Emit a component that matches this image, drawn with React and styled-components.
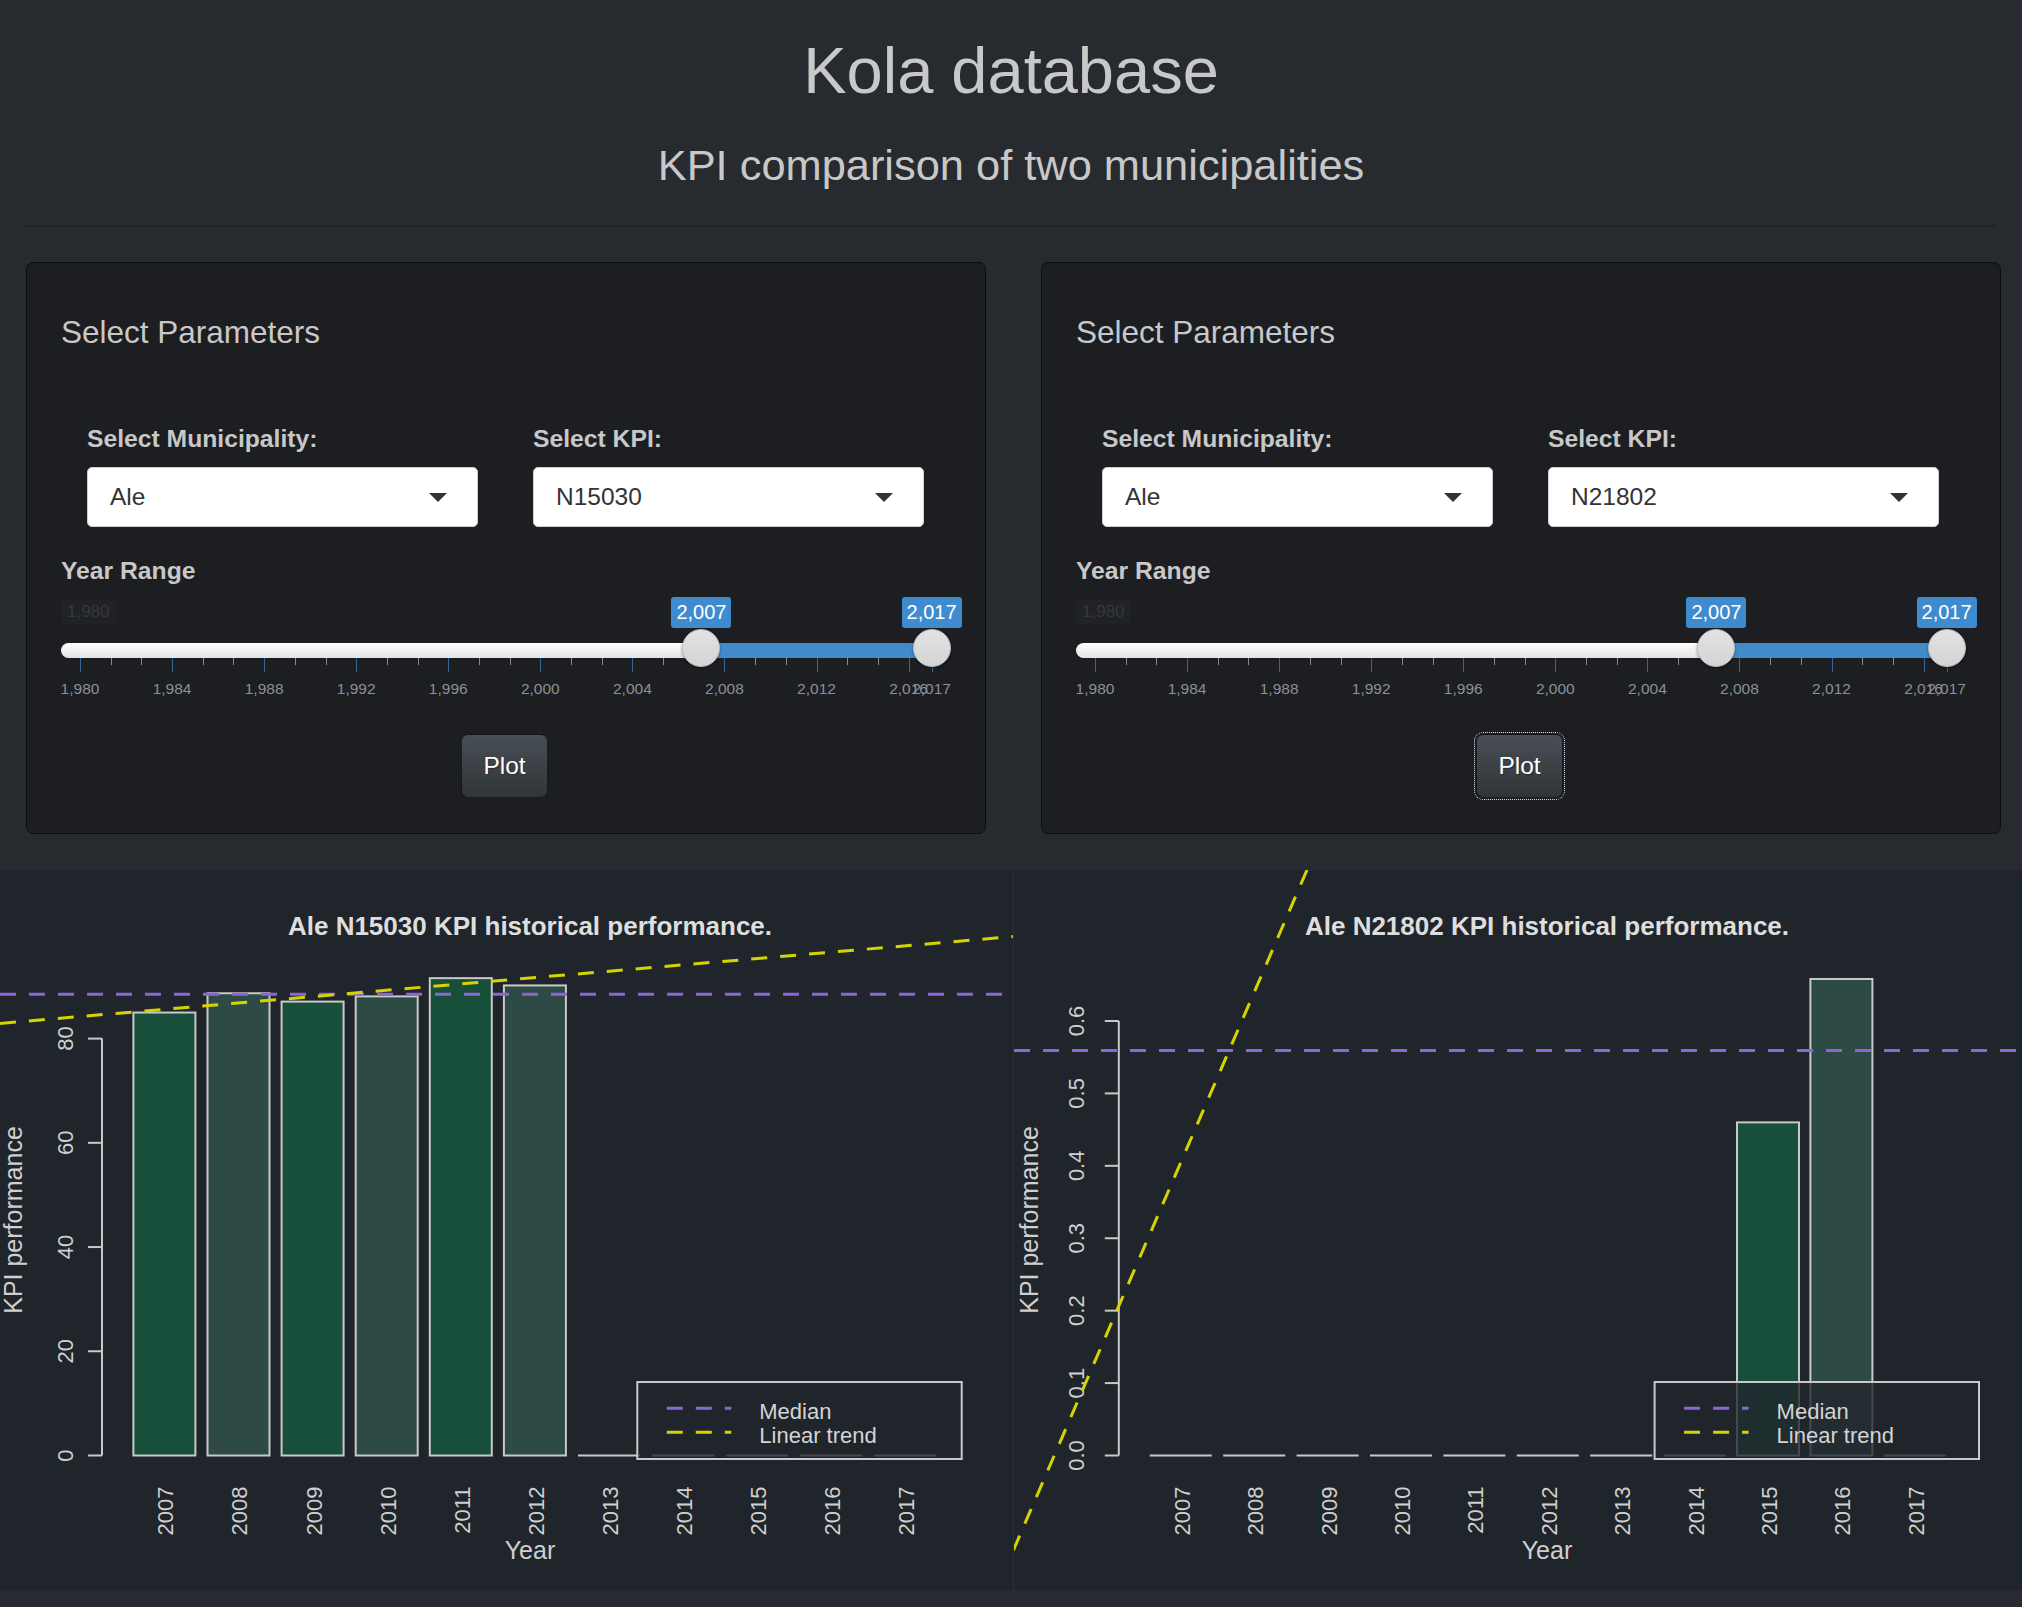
// /////////////// IMPORTS //////////////////////// //

import React from 'react';
import styled, { createGlobalStyle } from 'styled-components';

// /////////////// GLOBAL //////////////////////// //

const GlobalStyle = createGlobalStyle`
  html, body {
    margin: 0;
    padding: 0;
    background: #272b30;
  }
  body {
    font-family: "Liberation Sans", Arial, sans-serif;
    color: #c8c8c8;
  }
  * { box-sizing: border-box; }
`;

// /////////////// HEADER //////////////////////// //

const Header = styled.header`
  text-align: center;
  padding: 0 26px;
`;

const Title = styled.h1`
  margin: 35px 0 0;
  font-size: 65px;
  line-height: 1.1;
  font-weight: 400;
  color: #c8c8c8;
`;

const Subtitle = styled.h3`
  margin: 35px 0 0;
  font-size: 43.4px;
  line-height: 1.1;
  font-weight: 400;
  color: #c8c8c8;
`;

const Rule = styled.hr`
  margin: 35.5px 26px 0;
  border: 0;
  border-top: 2px solid #1f2226;
`;

// /////////////// PANELS //////////////////////// //

const PanelRow = styled.div`
  display: grid;
  grid-template-columns: 960px 960px;
  gap: 55px;
  padding: 0 26px;
  margin-top: 35px;
`;

const Well = styled.section`
  height: 572px;
  background: #1c1e22;
  border: 1px solid #0c0d0e;
  border-radius: 7px;
  box-shadow: inset 0 1px 1px rgba(0, 0, 0, 0.05);
  padding: 0 39px 0 34px;
`;

const WellTitle = styled.h4`
  margin: 52px 0 0;
  font-size: 31.5px;
  line-height: 1.1;
  font-weight: 400;
  color: #c8c8c8;
`;

const InputRow = styled.div`
  display: grid;
  grid-template-columns: 391px 391px;
  gap: 55px;
  padding-left: 26px;
  margin-top: 73px;
`;

const FieldLabel = styled.label`
  display: block;
  font-size: 24.7px;
  line-height: 34.3px;
  font-weight: 700;
  color: #c8c8c8;
  margin-bottom: 10px;
`;

const SelectBox = styled.div`
  height: 60.5px;
  display: flex;
  align-items: center;
  justify-content: space-between;
  background: #fff;
  border: 1px solid #cfcfcf;
  border-radius: 5px;
  padding: 0 30px 0 22px;
  font-size: 24.5px;
  color: #333;
`;

const Caret = styled.span`
  width: 0;
  height: 0;
  border-left: 9px solid transparent;
  border-right: 9px solid transparent;
  border-top: 9px solid #333;
  margin-top: 2px;
`;

const RangeLabel = styled(FieldLabel)`
  margin: 27px 0 0;
`;

// /////////////// SLIDER //////////////////////// //

const MIN_YEAR = 1980;
const MAX_YEAR = 2017;
const STEP = 23.016;
const yearX = (y) => 19 + (y - MIN_YEAR) * STEP;
const fmt = (y) => `${String(y)[0]},${String(y).slice(1)}`;

const SliderBox = styled.div`
  position: relative;
  height: 110px;
  margin-top: 7px;
`;

const Track = styled.div`
  position: absolute;
  left: 0;
  right: 0;
  top: 48px;
  height: 15px;
  border-radius: 8px;
  background: linear-gradient(#ffffff, #e3e3e3);
`;

const TrackFill = styled.div`
  position: absolute;
  top: 48px;
  height: 15px;
  background: #428bca;
`;

const Handle = styled.div`
  position: absolute;
  top: 34px;
  width: 38px;
  height: 38px;
  margin-left: -19px;
  border-radius: 50%;
  background: linear-gradient(#e2e2e2, #d4d4d4);
  border: 1px solid #bdbdbd;
  box-shadow: 0 1px 3px rgba(0, 0, 0, 0.4);
`;

const ValueTag = styled.span`
  position: absolute;
  top: 2px;
  height: 31px;
  line-height: 31px;
  padding: 0 5px;
  transform: translateX(-50%);
  background: #3f8bd0;
  color: #fff;
  font-size: 20px;
  border-radius: 3px;
`;

const MinTag = styled.span`
  position: absolute;
  left: 0;
  top: 4px;
  height: 25px;
  line-height: 25px;
  padding: 0 6px;
  background: #202226;
  color: #35383d;
  font-size: 17px;
  border-radius: 3px;
`;

const Tick = styled.span`
  position: absolute;
  top: 63px;
  width: 1px;
  height: ${(p) => (p.$major ? 14 : 7)}px;
  background: ${(p) => (p.$major ? '#31679b' : '#8a8a8a')};
`;

const TickLabel = styled.span`
  position: absolute;
  top: 85px;
  transform: translateX(-50%);
  font-size: 15.5px;
  line-height: 18px;
  color: #8a9097;
`;

const YearSlider = ({ from, to }) => {
  const majors = [];
  for (let y = MIN_YEAR; y <= 2016; y += 4) majors.push(y);
  majors.push(MAX_YEAR);
  const minors = [];
  for (let y = MIN_YEAR; y < 2016; y += 4) {
    minors.push(yearX(y) + STEP * 4 / 3, yearX(y) + STEP * 8 / 3);
  }
  return (
    <SliderBox>
      <MinTag>{fmt(MIN_YEAR)}</MinTag>
      <Track />
      <TrackFill style={{ left: yearX(from), width: yearX(to) - yearX(from) }} />
      {majors.map((y) => (
        <React.Fragment key={y}>
          <Tick $major style={{ left: yearX(y) }} />
          <TickLabel style={{ left: yearX(y) }}>{fmt(y)}</TickLabel>
        </React.Fragment>
      ))}
      {minors.map((x) => (
        <Tick key={x} style={{ left: x }} />
      ))}
      <Handle style={{ left: yearX(from) }} />
      <Handle style={{ left: yearX(to) }} />
      <ValueTag style={{ left: yearX(from) }}>{fmt(from)}</ValueTag>
      <ValueTag style={{ left: yearX(to) }}>{fmt(to)}</ValueTag>
    </SliderBox>
  );
};

// /////////////// BUTTON //////////////////////// //

const ButtonRow = styled.div`
  display: flex;
  justify-content: center;
  margin-top: 29px;
  padding-left: 2px;
`;

const PlotButton = styled.button`
  width: 87px;
  height: 64px;
  font-family: inherit;
  font-size: 24.5px;
  color: #fff;
  text-shadow: 1px 1px 1px rgba(0, 0, 0, 0.3);
  background: linear-gradient(#484e55, #3a3f44 60%, #313539);
  border: 1px solid rgba(0, 0, 0, 0.6);
  border-radius: 7px;
  outline: ${(p) => (p.$focused ? '1px dotted #dfe6ee' : 'none')};
  outline-offset: 1px;
`;

const ParamPanel = ({ kpi, focused }) => (
  <Well>
    <WellTitle>Select Parameters</WellTitle>
    <InputRow>
      <div>
        <FieldLabel>Select Municipality:</FieldLabel>
        <SelectBox>
          <span>Ale</span>
          <Caret />
        </SelectBox>
      </div>
      <div>
        <FieldLabel>Select KPI:</FieldLabel>
        <SelectBox>
          <span>{kpi}</span>
          <Caret />
        </SelectBox>
      </div>
    </InputRow>
    <RangeLabel>Year Range</RangeLabel>
    <YearSlider from={2007} to={2017} />
    <ButtonRow>
      <PlotButton $focused={focused}>Plot</PlotButton>
    </ButtonRow>
  </Well>
);

// /////////////// CHARTS //////////////////////// //

const PlotRow = styled.div`
  display: flex;
  margin-top: 36px;
  margin-bottom: 16px;
`;

const PlotBox = styled.div`
  width: ${(p) => p.$w}px;
  height: 720px;
  background: #20252b;
  border-left: ${(p) => (p.$divider ? '1px solid #2a2f35' : 'none')};
  svg { display: block; }
`;

const YEARS = [2007, 2008, 2009, 2010, 2011, 2012, 2013, 2014, 2015, 2016, 2017];
const FILLS = ['#174f3a', '#2d4a45'];
const INK = '#c9c9c9';
const Y0 = 585.5;

const KpiChart = ({ c }) => {
  const yOf = (v) => Y0 - v * c.scale;
  const lx = c.legendX;
  return (
    <PlotBox $w={c.width} $divider={c.divider}>
      <svg width={c.width - (c.divider ? 1 : 0)} height="720" fontFamily='"Liberation Sans", Arial, sans-serif'>
        <text x={c.titleX} y="65" textAnchor="middle" fontSize="26" fontWeight="700" fill="#dedede">
          {c.title}
        </text>

        {c.values.map((v, i) => {
          const x = c.barLeft + i * c.barStep;
          return v > 0 ? (
            <rect key={i} x={x} y={yOf(v)} width="62" height={Y0 - yOf(v)}
              fill={FILLS[i % 2]} stroke={INK} strokeWidth="2" />
          ) : (
            <line key={i} x1={x} x2={x + 62} y1={Y0} y2={Y0} stroke={INK} strokeWidth="2" />
          );
        })}

        <line x1={c.axisX} x2={c.axisX} y1={Y0} y2={yOf(c.ticks[c.ticks.length - 1])} stroke={INK} strokeWidth="2" />
        {c.ticks.map((t) => (
          <g key={t}>
            <line x1={c.axisX - 14} x2={c.axisX} y1={yOf(t)} y2={yOf(t)} stroke={INK} strokeWidth="2" />
            <text transform={`translate(${c.tickLabelX} ${yOf(t)}) rotate(-90)`} textAnchor="middle"
              dy="0.36em" fontSize="22" fill="#cfcfcf">
              {c.tickFmt(t)}
            </text>
          </g>
        ))}
        <text transform={`translate(${c.yLabelX} 350) rotate(-90)`} textAnchor="middle" dy="0.35em"
          fontSize="25" fill="#cfcfcf">
          KPI performance
        </text>

        {YEARS.map((y, i) => (
          <text key={y} transform={`translate(${c.barLeft + 32 + i * c.barStep} 616.5) rotate(-90)`}
            textAnchor="end" dy="0.36em" fontSize="22" fill="#cfcfcf">
            {y}
          </text>
        ))}
        <text x={c.titleX} y="689" textAnchor="middle" fontSize="25" fill="#cfcfcf">Year</text>

        <line x1="0" x2={c.width} y1={c.median} y2={c.median} stroke="#8c66d6" strokeWidth="3" strokeDasharray="16 13" />
        <line x1={c.trend[0][0]} y1={c.trend[0][1]} x2={c.trend[1][0]} y2={c.trend[1][1]}
          stroke="#d4d400" strokeWidth="3" strokeDasharray="16 13" />

        <rect x={lx} y="512" width="324.4" height="77" fill="rgba(32,37,43,0.78)" stroke={INK} strokeWidth="2" />
        <line x1={lx + 29.5} x2={lx + 94} y1="538.3" y2="538.3" stroke="#8c66d6" strokeWidth="3" strokeDasharray="16 13" />
        <line x1={lx + 29.5} x2={lx + 94} y1="562.3" y2="562.3" stroke="#d4d400" strokeWidth="3" strokeDasharray="16 13" />
        <text x={lx + 122} y="549" fontSize="22" fill="#d4d4d4">Median</text>
        <text x={lx + 122} y="573" fontSize="22" fill="#d4d4d4">Linear trend</text>
      </svg>
    </PlotBox>
  );
};

const leftChart = {
  width: 1013,
  title: 'Ale N15030 KPI historical performance.',
  titleX: 530,
  axisX: 102,
  scale: 5.2113,
  ticks: [0, 20, 40, 60, 80],
  tickFmt: (t) => String(t),
  tickLabelX: 65,
  yLabelX: 13,
  barLeft: 133.4,
  barStep: 74.1,
  values: [85.0, 88.7, 87.1, 88.1, 91.6, 90.2, 0, 0, 0, 0, 0],
  median: 124.3,
  trend: [[0, 153.4], [1013, 66.6]],
  legendX: 637.3,
};

const rightChart = {
  width: 1009,
  divider: true,
  title: 'Ale N21802 KPI historical performance.',
  titleX: 533,
  axisX: 104.8,
  scale: 724.2,
  ticks: [0, 0.1, 0.2, 0.3, 0.4, 0.5, 0.6],
  tickFmt: (t) => t.toFixed(1),
  tickLabelX: 61.6,
  yLabelX: 15,
  barLeft: 135.8,
  barStep: 73.4,
  values: [0, 0, 0, 0, 0, 0, 0, 0, 0.46, 0.658, 0],
  median: 180.6,
  trend: [[293, 0], [-17.8, 720]],
  legendX: 640.6,
};

// /////////////// COMPONENT //////////////////////// //

const App = () => (
  <>
    <GlobalStyle />
    <Header>
      <Title>Kola database</Title>
      <Subtitle>KPI comparison of two municipalities</Subtitle>
    </Header>
    <Rule />
    <PanelRow>
      <ParamPanel kpi="N15030" />
      <ParamPanel kpi="N21802" focused />
    </PanelRow>
    <PlotRow>
      <KpiChart c={leftChart} />
      <KpiChart c={rightChart} />
    </PlotRow>
  </>
);

export default App;
